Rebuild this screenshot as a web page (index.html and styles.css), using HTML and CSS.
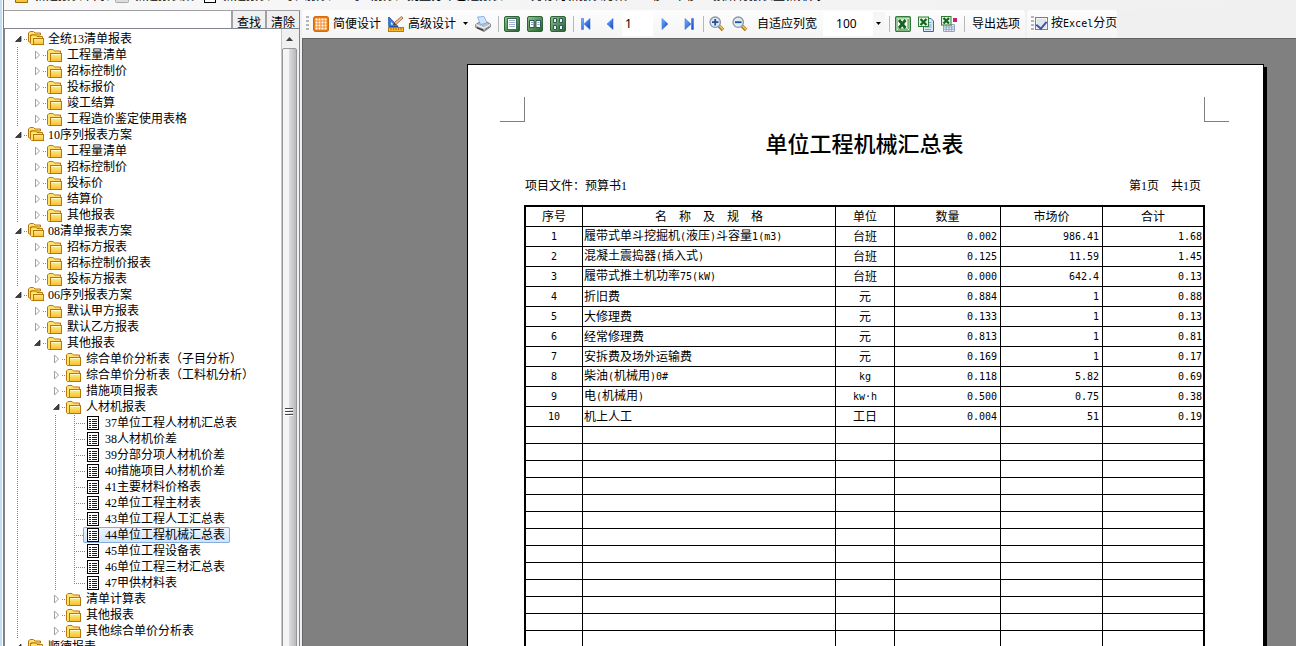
FILE: index.html
```html
<!DOCTYPE html>
<html lang="zh-CN">
<head>
<meta charset="utf-8">
<title>报表打印</title>
<link rel="stylesheet" href="styles.css">
</head>
<body>
<svg class="defs" aria-hidden="true">
  <defs>
    <linearGradient id="gold" x1="0" y1="0" x2="0" y2="1"><stop offset="0" stop-color="#fff08c"/><stop offset="1" stop-color="#f8bc2c"/></linearGradient>
    <linearGradient id="blue" x1="0" y1="0" x2="1" y2="1"><stop offset="0" stop-color="#7db4ff"/><stop offset="1" stop-color="#0c3fc4"/></linearGradient>
    <linearGradient id="green" x1="0" y1="0" x2="1" y2="1"><stop offset="0" stop-color="#8fc48f"/><stop offset="1" stop-color="#23612c"/></linearGradient>
    <symbol id="folder" viewBox="0 0 16 16"><path d="M.5 13.500V4L2 2.500H6L7.500 4H13.500V6.500H3.500V14.500H1.500Z" fill="#ffe36a" stroke="#b8770b"/><rect x="3.500" y="6.500" width="11" height="8" fill="url(#gold)" stroke="#b8770b"/><path d="M4.500 7.500H13.500" stroke="#fffbd0"/></symbol>
    <symbol id="folders" viewBox="0 0 16 16"><path d="M.5 10.500V2L2 .5H5.500L7 2H12.500V4H2.500V11.500Z" fill="#ffe36a" stroke="#b8770b"/><path d="M2.500 12.500V5.500L4 4H7.500L9 5.500H14.500V7.500H5.500V13.500H3.500Z" fill="#ffe36a" stroke="#b8770b"/><rect x="5.500" y="7.500" width="10" height="6" fill="url(#gold)" stroke="#b8770b"/></symbol>
    <symbol id="sheet" viewBox="0 0 12 14"><rect x=".5" y=".5" width="11" height="13" fill="#fff" stroke="#000"/><path d="M2 3.500H4M5 3.500H10M2 5.500H4M5 5.500H10M2 7.500H4M5 7.500H10M2 9.500H4M5 9.500H10M2 11.500H4M5 11.500H10" stroke="#0a0aa8"/></symbol>
    <symbol id="closed" viewBox="0 0 7 10"><path d="M1.500 1V9L5.500 5Z" fill="#fff" stroke="#a0a0a0"/></symbol>
    <symbol id="open" viewBox="0 0 7 10"><path d="M6 2V7.500H.5Z" fill="#404040" stroke="#1c1c1c" stroke-width=".7"/></symbol>
    <symbol id="caret" viewBox="0 0 5 3"><path d="M0 0H5L2.500 3Z"/></symbol>
    <symbol id="page-green" viewBox="0 0 16 16"><rect x=".5" y=".5" width="15" height="15" rx="1.500" fill="url(#green)" stroke="#2d6535"/></symbol>
    <symbol id="excel" viewBox="0 0 16 16"><rect x=".7" y=".7" width="14.600" height="14.600" rx="1" fill="#dff0dc" stroke="#2f7d35" stroke-width="1.400"/><path d="M13.500 3V13M3 13.500H13" stroke="#7fb27d"/><rect x="2.500" y="3" width="10" height="9.500" fill="#fff" stroke="#68a968" stroke-width=".6"/><path d="M4 4L10.500 12M10.500 4L4 12" stroke="#12661f" stroke-width="2.800"/></symbol>
  </defs>
</svg>

<div class="window">
  <div class="menu-bar">
    <span class="tool m1"><svg class="icon" viewBox="0 0 16 16"><path d="M1.500 14.500V3.500H6L8 5H13.500V14.500Z" fill="url(#gold)" stroke="#9a6a10"/></svg>新建报表/目录</span>
    <span class="tool m2"><svg class="icon" viewBox="0 0 16 16"><rect x="1.500" y="3.500" width="13" height="11" rx="1" fill="#ddd" stroke="#aaa"/></svg>新建报表集</span>
    <span class="tool m3"><svg class="icon" viewBox="0 0 16 16"><rect x="2.500" y="2.500" width="11" height="12" fill="#fff" stroke="#000"/></svg>新建报表</span>
    <span class="tool m4">导入报表</span>
    <span class="tool m5">导出报表</span>
    <span class="tool m6">批量打印已选报表</span>
    <span class="tool m7">另存为新报表方案</span>
    <span class="tool m8">上移</span>
    <span class="tool m9">下移</span>
    <span class="tool m10">按所有报表重新排列</span>
  </div>

  <div class="body">
    <aside class="side">
      <form class="search">
        <input type="text" aria-label="查找报表">
        <button type="button">查找</button>
        <button type="button">清除</button>
      </form>
      <div class="tree-box">
        <ul class="tree">
          <li><div class="row"><svg class="arrow"><use href="#open"/></svg><i></i><svg class="fold"><use href="#folders"/></svg><span>全统13清单报表</span></div>
            <ul class="guide">
              <li><div class="row"><svg class="arrow"><use href="#closed"/></svg><i></i><svg class="fold"><use href="#folder"/></svg><span>工程量清单</span></div></li>
              <li><div class="row"><svg class="arrow"><use href="#closed"/></svg><i></i><svg class="fold"><use href="#folder"/></svg><span>招标控制价</span></div></li>
              <li><div class="row"><svg class="arrow"><use href="#closed"/></svg><i></i><svg class="fold"><use href="#folder"/></svg><span>投标报价</span></div></li>
              <li><div class="row"><svg class="arrow"><use href="#closed"/></svg><i></i><svg class="fold"><use href="#folder"/></svg><span>竣工结算</span></div></li>
              <li><div class="row"><svg class="arrow"><use href="#closed"/></svg><i></i><svg class="fold"><use href="#folder"/></svg><span>工程造价鉴定使用表格</span></div></li>
            </ul>
          </li>
          <li><div class="row"><svg class="arrow"><use href="#open"/></svg><i></i><svg class="fold"><use href="#folders"/></svg><span>10序列报表方案</span></div>
            <ul class="guide">
              <li><div class="row"><svg class="arrow"><use href="#closed"/></svg><i></i><svg class="fold"><use href="#folder"/></svg><span>工程量清单</span></div></li>
              <li><div class="row"><svg class="arrow"><use href="#closed"/></svg><i></i><svg class="fold"><use href="#folder"/></svg><span>招标控制价</span></div></li>
              <li><div class="row"><svg class="arrow"><use href="#closed"/></svg><i></i><svg class="fold"><use href="#folder"/></svg><span>投标价</span></div></li>
              <li><div class="row"><svg class="arrow"><use href="#closed"/></svg><i></i><svg class="fold"><use href="#folder"/></svg><span>结算价</span></div></li>
              <li><div class="row"><svg class="arrow"><use href="#closed"/></svg><i></i><svg class="fold"><use href="#folder"/></svg><span>其他报表</span></div></li>
            </ul>
          </li>
          <li><div class="row"><svg class="arrow"><use href="#open"/></svg><i></i><svg class="fold"><use href="#folders"/></svg><span>08清单报表方案</span></div>
            <ul class="guide">
              <li><div class="row"><svg class="arrow"><use href="#closed"/></svg><i></i><svg class="fold"><use href="#folder"/></svg><span>招标方报表</span></div></li>
              <li><div class="row"><svg class="arrow"><use href="#closed"/></svg><i></i><svg class="fold"><use href="#folder"/></svg><span>招标控制价报表</span></div></li>
              <li><div class="row"><svg class="arrow"><use href="#closed"/></svg><i></i><svg class="fold"><use href="#folder"/></svg><span>投标方报表</span></div></li>
            </ul>
          </li>
          <li><div class="row"><svg class="arrow"><use href="#open"/></svg><i></i><svg class="fold"><use href="#folders"/></svg><span>06序列报表方案</span></div>
            <ul class="guide">
              <li><div class="row"><svg class="arrow"><use href="#closed"/></svg><i></i><svg class="fold"><use href="#folder"/></svg><span>默认甲方报表</span></div></li>
              <li><div class="row"><svg class="arrow"><use href="#closed"/></svg><i></i><svg class="fold"><use href="#folder"/></svg><span>默认乙方报表</span></div></li>
              <li><div class="row"><svg class="arrow"><use href="#open"/></svg><i></i><svg class="fold"><use href="#folder"/></svg><span>其他报表</span></div>
                <ul>
                  <li><div class="row"><svg class="arrow"><use href="#closed"/></svg><i></i><svg class="fold"><use href="#folder"/></svg><span>综合单价分析表（子目分析）</span></div></li>
                  <li><div class="row"><svg class="arrow"><use href="#closed"/></svg><i></i><svg class="fold"><use href="#folder"/></svg><span>综合单价分析表（工料机分析）</span></div></li>
                  <li><div class="row"><svg class="arrow"><use href="#closed"/></svg><i></i><svg class="fold"><use href="#folder"/></svg><span>措施项目报表</span></div></li>
                  <li><div class="row"><svg class="arrow"><use href="#open"/></svg><i></i><svg class="fold"><use href="#folder"/></svg><span>人材机报表</span></div>
                    <ul class="guide leaves">
                      <li><div class="leaf"><svg class="sheet"><use href="#sheet"/></svg><span>37单位工程人材机汇总表</span></div></li>
                      <li><div class="leaf"><svg class="sheet"><use href="#sheet"/></svg><span>38人材机价差</span></div></li>
                      <li><div class="leaf"><svg class="sheet"><use href="#sheet"/></svg><span>39分部分项人材机价差</span></div></li>
                      <li><div class="leaf"><svg class="sheet"><use href="#sheet"/></svg><span>40措施项目人材机价差</span></div></li>
                      <li><div class="leaf"><svg class="sheet"><use href="#sheet"/></svg><span>41主要材料价格表</span></div></li>
                      <li><div class="leaf"><svg class="sheet"><use href="#sheet"/></svg><span>42单位工程主材表</span></div></li>
                      <li><div class="leaf"><svg class="sheet"><use href="#sheet"/></svg><span>43单位工程人工汇总表</span></div></li>
                      <li><div class="leaf selected"><svg class="sheet"><use href="#sheet"/></svg><span>44单位工程机械汇总表</span></div></li>
                      <li><div class="leaf"><svg class="sheet"><use href="#sheet"/></svg><span>45单位工程设备表</span></div></li>
                      <li><div class="leaf"><svg class="sheet"><use href="#sheet"/></svg><span>46单位工程三材汇总表</span></div></li>
                      <li><div class="leaf"><svg class="sheet"><use href="#sheet"/></svg><span>47甲供材料表</span></div></li>
                    </ul>
                  </li>
                  <li><div class="row"><svg class="arrow"><use href="#closed"/></svg><i></i><svg class="fold"><use href="#folder"/></svg><span>清单计算表</span></div></li>
                  <li><div class="row"><svg class="arrow"><use href="#closed"/></svg><i></i><svg class="fold"><use href="#folder"/></svg><span>其他报表</span></div></li>
                  <li><div class="row"><svg class="arrow"><use href="#closed"/></svg><i></i><svg class="fold"><use href="#folder"/></svg><span>其他综合单价分析表</span></div></li>
                </ul>
              </li>
            </ul>
          </li>
          <li><div class="row"><svg class="arrow"><use href="#open"/></svg><i></i><svg class="fold"><use href="#folders"/></svg><span>顺德报表</span></div></li>
        </ul>
        <div class="scrollbar">
          <div class="scroll-up"><svg viewBox="0 0 7 4"><path d="M0 4H7L3.500 0Z" fill="#404040"/></svg></div>
          <div class="thumb"><svg viewBox="0 0 8 8"><path d="M0 .5H8M0 3.500H8M0 6.500H8" stroke="#444"/><path d="M0 1.500H8M0 4.500H8M0 7.500H8" stroke="#fff"/></svg></div>
        </div>
      </div>
    </aside>

    <main class="main">
      <div class="toolbars">
        <div class="toolbar">
          <span class="grip"></span>
          <button class="tool"><svg class="icon" viewBox="0 0 16 16"><rect x=".7" y=".7" width="14.600" height="14.600" rx="2" fill="#f58a1c" stroke="#d86a0c" stroke-width="1.400"/><g fill="#fff"><path d="M2.500 2.500h2v2h-2zM5.500 2.500h2v2h-2zM8.500 2.500h2v2h-2zM11.500 2.500h2v2h-2zM2.500 5.500h2v2h-2zM5.500 5.500h2v2h-2zM8.500 5.500h2v2h-2zM11.500 5.500h2v2h-2zM2.500 8.500h2v2h-2zM5.500 8.500h2v2h-2zM8.500 8.500h2v2h-2zM11.500 8.500h2v2h-2zM2.500 11.500h2v2h-2zM5.500 11.500h2v2h-2zM8.500 11.500h2v2h-2zM11.500 11.500h2v2h-2z"/></g></svg>简便设计</button>
          <button class="tool"><svg class="icon" viewBox="0 0 16 16"><path d="M.8 1V10.500H10Z" fill="#3f83e0" stroke="#1e4fae"/><path d="M3 6V8.500H5.500Z" fill="#fff"/><path d="M5.500 9L6.500 6.500L13.500 .5L15 2L8 8.500Z" fill="#f0c896" stroke="#9a4a24" stroke-width=".8"/><path d="M5.500 9L6.500 6.500L8 8.500Z" fill="#333"/><rect x=".5" y="11.500" width="15" height="4" fill="#f7b932" stroke="#bd7a0c"/><path d="M3 12V14M5.500 12V14M8 12V14M10.500 12V14M13 12V14" stroke="#9a5e08" stroke-width=".8"/></svg>高级设计</button>
          <button class="tool" aria-label="更多设计"><svg class="caret"><use href="#caret"/></svg></button>
          <button class="tool" aria-label="打印"><svg class="icon" viewBox="0 0 16 16"><path d="M.7 8.500L4 6.500L12 6L15.300 8V11L9 15.500L.7 11.500Z" fill="#b9bec4" stroke="#5d646c" stroke-width=".8"/><path d="M2.500 1L9 .5L12 7L5.500 8.500Z" fill="#cfe5ff" stroke="#74a5dc" stroke-width=".8"/><path d="M1 8.700L9 12L15 8.500" fill="none" stroke="#fff"/><path d="M2 11L8.500 13.500V15L2 12.300Z" fill="#333"/><path d="M10 13.500L14 11" stroke="#6d747c"/></svg></button>
          <span class="sep"></span>
          <button class="tool" aria-label="单页"><svg class="icon" viewBox="0 0 16 16"><use href="#page-green"/><rect x="3.500" y="2.500" width="9" height="11" fill="#fff" stroke="#466"/><path d="M5 4.500H11M5 6.500H11M5 8.500H11M5 10.500H11" stroke="#9db4cc"/></svg></button>
          <button class="tool" aria-label="双页"><svg class="icon" viewBox="0 0 16 16"><use href="#page-green"/><path d="M2.500 4.500H7V11.500H2.500ZM9 4.500H13.500V11.500H9Z" fill="#fff" stroke="#355"/><path d="M4 6.500H6M4 8.500H6M10.500 6.500H12.500M10.500 8.500H12.500" stroke="#7f9cb8"/></svg></button>
          <button class="tool" aria-label="多页"><svg class="icon" viewBox="0 0 16 16"><use href="#page-green"/><path d="M3.500 2.500H6.500V6.500H3.500ZM9.500 2.500H12.500V6.500H9.500ZM3.500 9.500H6.500V13.500H3.500ZM9.500 9.500H12.500V13.500H9.500Z" fill="#e6f2ff" stroke="#355"/></svg></button>
          <span class="sep"></span>
          <button class="tool" aria-label="首页"><svg class="icon" viewBox="0 0 16 16"><path d="M2.500 2.500H4.500V13.500H2.500ZM11 2.500V13.500L5 8Z" fill="url(#blue)" stroke="#3d74dc" stroke-width=".6"/></svg></button>
          <button class="tool" aria-label="上一页"><svg class="icon" viewBox="0 0 16 16"><path d="M11 2.500V13.500L5 8Z" fill="url(#blue)" stroke="#3d74dc" stroke-width=".6"/></svg></button>
          <input class="page-no" type="text" value="1" aria-label="页码">
          <button class="tool" aria-label="下一页"><svg class="icon" viewBox="0 0 16 16"><path d="M5 2.500V13.500L11 8Z" fill="url(#blue)" stroke="#3d74dc" stroke-width=".6"/></svg></button>
          <button class="tool" aria-label="末页"><svg class="icon" viewBox="0 0 16 16"><path d="M11.500 2.500H13.500V13.500H11.500ZM5 2.500V13.500L11 8Z" fill="url(#blue)" stroke="#3d74dc" stroke-width=".6"/></svg></button>
          <span class="sep"></span>
          <button class="tool" aria-label="放大"><svg class="icon" viewBox="0 0 16 16"><path d="M10 10L14 14" stroke="#a9731d" stroke-width="3.400"/><path d="M10.500 10L14 13.500" stroke="#f0c858" stroke-width="1.600"/><circle cx="6.200" cy="6.200" r="5.200" fill="#dfeaf5" stroke="#8797a8" stroke-width="1.300"/><path d="M3 6.200H9.500M6.200 3V9.500" stroke="#1f4f9c" stroke-width="1.800"/></svg></button>
          <button class="tool" aria-label="缩小"><svg class="icon" viewBox="0 0 16 16"><path d="M10 10L14 14" stroke="#a9731d" stroke-width="3.400"/><path d="M10.500 10L14 13.500" stroke="#f0c858" stroke-width="1.600"/><circle cx="6.200" cy="6.200" r="5.200" fill="#dfeaf5" stroke="#8797a8" stroke-width="1.300"/><path d="M3 6.200H9.500" stroke="#1f4f9c" stroke-width="1.800"/></svg></button>
          <button class="tool wide">自适应列宽</button>
          <span class="zoom"><select aria-label="缩放比例"><option>100</option></select><svg class="caret"><use href="#caret"/></svg></span>
          <span class="sep"></span>
          <button class="tool" aria-label="导出Excel"><svg class="icon"><use href="#excel"/></svg></button>
          <button class="tool" aria-label="导出多个Excel"><svg class="icon" viewBox="0 0 16 16"><path d="M6.500 2.500H13L15.500 5V15.500H5.500V2.500" fill="#d9e8fa" stroke="#3a65ac"/><path d="M11 6.500H13.500M11 9H13.500M7 11H13.500M7 13.500H13" stroke="#7da0d4"/><rect x=".5" y="1" width="10" height="9.500" fill="#e4f3e2" stroke="#2f7d35"/><path d="M2.500 3L8.500 9M8.500 3L2.500 9" stroke="#12661f" stroke-width="2.200"/></svg></button>
          <button class="tool" aria-label="导出表格"><svg class="icon" viewBox="0 0 16 16"><path d="M2.500 8.500H13.500V15.500H2.500ZM2.500 11H13.500M2.500 13.300H13.500M5.200 8V15.500M8 8V15.500M10.700 8V15.500" fill="#edf2f8" stroke="#91a6c2"/><rect x="12" y="2" width="4" height="4" fill="#c81f6b"/><rect x=".5" y=".5" width="9.500" height="8.500" fill="#e4f3e2" stroke="#2f7d35"/><path d="M2.500 2L8 7.500M8 2L2.500 7.500" stroke="#12661f" stroke-width="2.200"/></svg></button>
          <span class="sep"></span>
          <button class="tool wide">导出选项</button>
        </div>
        <div class="toolbar paging">
          <span class="grip"></span>
          <label><input type="checkbox" checked><span>按<span class="mono">Excel</span>分页</span></label>
        </div>
      </div>

      <div class="canvas">
        <article class="paper">
          <div class="corners"><span class="corner left"></span><span class="corner right"></span></div>
          <div class="report">
            <h1>单位工程机械汇总表</h1>
            <div class="info"><span>项目文件：预算书1</span><span>第1页　共1页</span></div>
            <table>
              <colgroup><col class="c-no"><col><col class="c-unit"><col class="c-qty"><col class="c-price"><col class="c-sum"></colgroup>
              <thead><tr><th>序号</th><th>名　称　及　规　格</th><th>单位</th><th>数量</th><th>市场价</th><th>合计</th></tr></thead>
              <tbody>
                <tr><td>1</td><td>履带式单斗挖掘机<b>(</b>液压<b>)</b>斗容量<b>1(m3)</b></td><td>台班</td><td>0.002</td><td>986.41</td><td>1.68</td></tr>
                <tr><td>2</td><td>混凝土震捣器<b>(</b>插入式<b>)</b></td><td>台班</td><td>0.125</td><td>11.59</td><td>1.45</td></tr>
                <tr><td>3</td><td>履带式推土机功率<b>75(kW)</b></td><td>台班</td><td>0.000</td><td>642.4</td><td>0.13</td></tr>
                <tr><td>4</td><td>折旧费</td><td>元</td><td>0.884</td><td>1</td><td>0.88</td></tr>
                <tr><td>5</td><td>大修理费</td><td>元</td><td>0.133</td><td>1</td><td>0.13</td></tr>
                <tr><td>6</td><td>经常修理费</td><td>元</td><td>0.813</td><td>1</td><td>0.81</td></tr>
                <tr><td>7</td><td>安拆费及场外运输费</td><td>元</td><td>0.169</td><td>1</td><td>0.17</td></tr>
                <tr><td>8</td><td>柴油<b>(</b>机械用<b>)0#</b></td><td><b>kg</b></td><td>0.118</td><td>5.82</td><td>0.69</td></tr>
                <tr><td>9</td><td>电<b>(</b>机械用<b>)</b></td><td><b>kw·h</b></td><td>0.500</td><td>0.75</td><td>0.38</td></tr>
                <tr><td>10</td><td>机上人工</td><td>工日</td><td>0.004</td><td>51</td><td>0.19</td></tr>
              </tbody>
              <tbody class="blank">
                <tr><td></td><td></td><td></td><td></td><td></td><td></td></tr>
                <tr><td></td><td></td><td></td><td></td><td></td><td></td></tr>
                <tr><td></td><td></td><td></td><td></td><td></td><td></td></tr>
                <tr><td></td><td></td><td></td><td></td><td></td><td></td></tr>
                <tr><td></td><td></td><td></td><td></td><td></td><td></td></tr>
                <tr><td></td><td></td><td></td><td></td><td></td><td></td></tr>
                <tr><td></td><td></td><td></td><td></td><td></td><td></td></tr>
                <tr><td></td><td></td><td></td><td></td><td></td><td></td></tr>
                <tr><td></td><td></td><td></td><td></td><td></td><td></td></tr>
                <tr><td></td><td></td><td></td><td></td><td></td><td></td></tr>
                <tr><td></td><td></td><td></td><td></td><td></td><td></td></tr>
                <tr><td></td><td></td><td></td><td></td><td></td><td></td></tr>
                <tr><td></td><td></td><td></td><td></td><td></td><td></td></tr>
                <tr><td></td><td></td><td></td><td></td><td></td><td></td></tr>
              </tbody>
            </table>
          </div>
        </article>
      </div>
    </main>
  </div>
</div>
</body>
</html>
```
FILE: styles.css
```css
* { box-sizing: border-box; }

body {
  margin: 0;
  height: 100vh;
  overflow: hidden;
  background: #f0f0f0;
  color: #000;
  font: 12px/16px "Liberation Serif", "Noto Sans CJK SC", sans-serif;
}

button, input, select { font: inherit; color: inherit; margin: 0; }

svg { display: block; flex: none; overflow: visible; fill: none; }
.defs { position: absolute; width: 0; height: 0; }
.icon { width: 16px; height: 16px; }
.caret { width: 5px; height: 3px; fill: #000; }

.window {
  display: flex;
  flex-direction: column;
  height: 100vh;
  overflow: hidden;
  border-left: 2px solid #c3ddf3;
  box-shadow: inset 1px 0 #fff, inset 2px 0 #6f8296;
  padding-left: 2px;
}

/* Upper toolbar, scrolled so that only its lower edge shows */
.menu-bar {
  display: flex;
  align-items: flex-end;
  flex: none;
  height: 10px;
  padding-bottom: 6px;
  padding-left: 8px;
  overflow: hidden;
  white-space: nowrap;
  background: linear-gradient(90deg, #f8f8f8, #f0f0f0);
}
.menu-bar .tool { padding: 0; flex: none; }
.m1 { width: 100px; margin-left: 2px; }
.m2 { width: 88px; }
.m3 { width: 73px; border-right: 1px solid #b5b5b5; }
.m4 { width: 67px; }
.m4, .m7, .m8, .m10 { margin-left: 8px; }
.m5 { width: 57px; }
.m6 { width: 116px; border-right: 1px solid #b5b5b5; }
.m7 { width: 101px; border-right: 1px solid #b5b5b5; }
.m8 { width: 34px; }
.m9 { width: 31px; border-right: 1px solid #b5b5b5; }

.body { display: flex; flex: 1; min-height: 0; }

/* Left panel */
.side {
  display: flex;
  flex-direction: column;
  width: 296px;
  flex: none;
  border-right: 1px solid #80858c;
  border-top: 1px solid #a0a0a5;
}
.search { display: flex; flex: none; height: 17px; overflow: hidden; }
.search input { flex: 1; min-width: 0; border: 0; background: #fff; height: 17px; }
.search button {
  width: 34px;
  height: 22px;
  flex: none;
  padding: 2px 0 0;
  border: 0;
  border-left: 2px solid #a0a0a5;
  background: #f0f0f0;
}
.tree-box {
  display: flex;
  flex: 1;
  min-height: 0;
  border: 1px solid #80858c;
  border-width: 1px 0 0 1px;
  background: #fff;
}
.tree { flex: 1; min-width: 0; overflow: hidden; padding: 2px 0 0 10px; }
.tree, .tree ul { list-style: none; margin: 0; }
.tree ul { padding: 0 0 0 19px; }
.tree .guide {
  background: repeating-linear-gradient(#888 0 1px, #fff 1px 2px) 2px 0 / 1px 100% no-repeat;
}
.row { display: flex; align-items: center; height: 16px; white-space: nowrap; }
.arrow { width: 7px; height: 10px; }
.row i { width: 3px; margin: 0 1px 0 2px; border-top: 1px dotted #888; }
.fold { width: 16px; height: 16px; margin-right: 4px; }
.tree .leaves { padding-left: 21px; }
.leaves > li {
  padding-left: 9px;
  background:
    repeating-linear-gradient(#888 0 1px, #fff 1px 2px) 0 0 / 1px 100% no-repeat,
    repeating-linear-gradient(90deg, #888 0 1px, #fff 1px 2px) 0 8px / 11px 1px no-repeat;
}
.leaves > li:last-child { background-size: 1px 50%, 11px 1px; }
.leaf {
  display: inline-flex;
  align-items: center;
  gap: 6px;
  height: 16px;
  padding: 0 5px 0 4px;
  vertical-align: top;
  white-space: nowrap;
}
.leaf.selected {
  border-radius: 2px;
  background: linear-gradient(#eff6fe, #cfe3fb);
  box-shadow: inset 0 0 0 1px #84acdd;
}
.sheet { width: 12px; height: 14px; }

.scrollbar {
  display: flex;
  flex-direction: column;
  width: 18px;
  flex: none;
  padding-right: 2px;
  border-left: 1px solid #c5c5c5;
  background: #f0f0f0;
}
.scroll-up { display: flex; flex: none; height: 19px; align-items: center; justify-content: center; }
.scroll-up svg { width: 7px; height: 4px; }
.thumb {
  display: flex;
  flex: none;
  height: 728px;
  align-items: center;
  justify-content: center;
  padding-right: 2px;
  border: 1px solid #979797;
  border-radius: 2px;
  background: linear-gradient(90deg, #f5f5f5 0 45%, #dcdcdf 50%, #b8b8bd);
}
.thumb svg { width: 8px; height: 8px; }

/* Right panel */
.main { display: flex; flex-direction: column; flex: 1; min-width: 0; padding-left: 2px; }
.toolbars { display: flex; flex: none; gap: 2px; height: 28px; }
.toolbar {
  display: flex;
  align-items: center;
  flex: none;
  gap: 1px;
  padding-left: 4px;
  padding-bottom: 1px;
  border-radius: 3px;
  background: linear-gradient(#fdfdfd, #f4f4f4);
}
.grip {
  width: 3px;
  height: 15px;
  background: repeating-linear-gradient(#b4b4b4 0 2px, #fafafa 2px 4px);
}
.tool {
  display: flex;
  align-items: center;
  gap: 4px;
  flex: none;
  padding: 0 3px;
  border: 0;
  background: none;
  white-space: nowrap;
}
.tool.wide { padding: 0 5px; }
.sep { width: 1px; height: 16px; margin: 0 1px 0 3px; background: #b8b8b8; }
.page-no, .zoom select { font-family: "Noto Sans", sans-serif; border: 0; background: #fff; }
.page-no { width: 31px; height: 24px; padding: 0 3px; }
.zoom { display: flex; align-items: center; width: 62px; height: 24px; background: #f6f6f6; }
.zoom select { appearance: none; width: 50px; height: 24px; padding: 0 0 0 13px; }
.zoom .caret { margin-left: 3px; }
.paging label { display: flex; align-items: center; gap: 3px; }
.paging input {
  display: grid;
  place-items: center;
  appearance: none;
  width: 13px;
  height: 13px;
  border: 1px solid #7c7e80;
  background: #dfe6ef;
  box-shadow: inset 0 0 0 1px #f4f4f4;
}
.paging input:checked::before {
  content: "";
  width: 5px;
  height: 8px;
  border: solid #3a57a6;
  border-width: 0 2px 2px 0;
  transform: rotate(40deg);
}
.mono, td b {
  font: 10px/16px "DejaVu Sans Mono", monospace;
}

.canvas {
  flex: 1;
  min-height: 0;
  overflow: hidden;
  padding: 25px 32px 0 164px;
  border: 1px solid #646464;
  border-width: 1px 0 0 1px;
  background: #808080;
}
.paper {
  padding-top: 32px;
  border: 1px solid #000;
  background: #fff;
  box-shadow: 3px 3px 0 #000;
}
.corners { display: flex; justify-content: space-between; padding: 0 34px 0 32px; }
.corner { width: 25px; height: 25px; border: 0 solid #808080; border-bottom-width: 1px; }
.corner.left { border-right-width: 1px; }
.corner.right { border-left-width: 1px; }
.report { padding: 7px 58px 0 56px; }
h1 { margin: 0; font-size: 22px; line-height: 32px; font-weight: 500; text-align: center; }
.info { display: flex; justify-content: space-between; padding: 17px 4px 11px 1px; }

table {
  width: 100%;
  table-layout: fixed;
  border: 2px solid #000;
  border-collapse: separate;
  border-spacing: 0;
}
.c-no { width: 57px; }
.c-unit { width: 59px; }
.c-qty { width: 106px; }
.c-price { width: 102px; }
.c-sum { width: 100px; }
th, td {
  height: 20px;
  padding: 0 1px;
  border: 0 solid #000;
  border-width: 0 1px 1px 0;
  font-weight: 400;
  line-height: 16px;
  text-align: center;
  white-space: nowrap;
}
th:last-child, td:last-child { border-right-width: 0; }
td:nth-child(2) { text-align: left; }
td:nth-child(n+4) {
  font: 10px/16px "DejaVu Sans Mono", monospace;
  text-align: right;
}
td:nth-child(4), td:nth-child(5) { padding-right: 3px; }
td:first-child { font: 10px/16px "DejaVu Sans Mono", monospace; }
.blank td { height: 17px; }
```
